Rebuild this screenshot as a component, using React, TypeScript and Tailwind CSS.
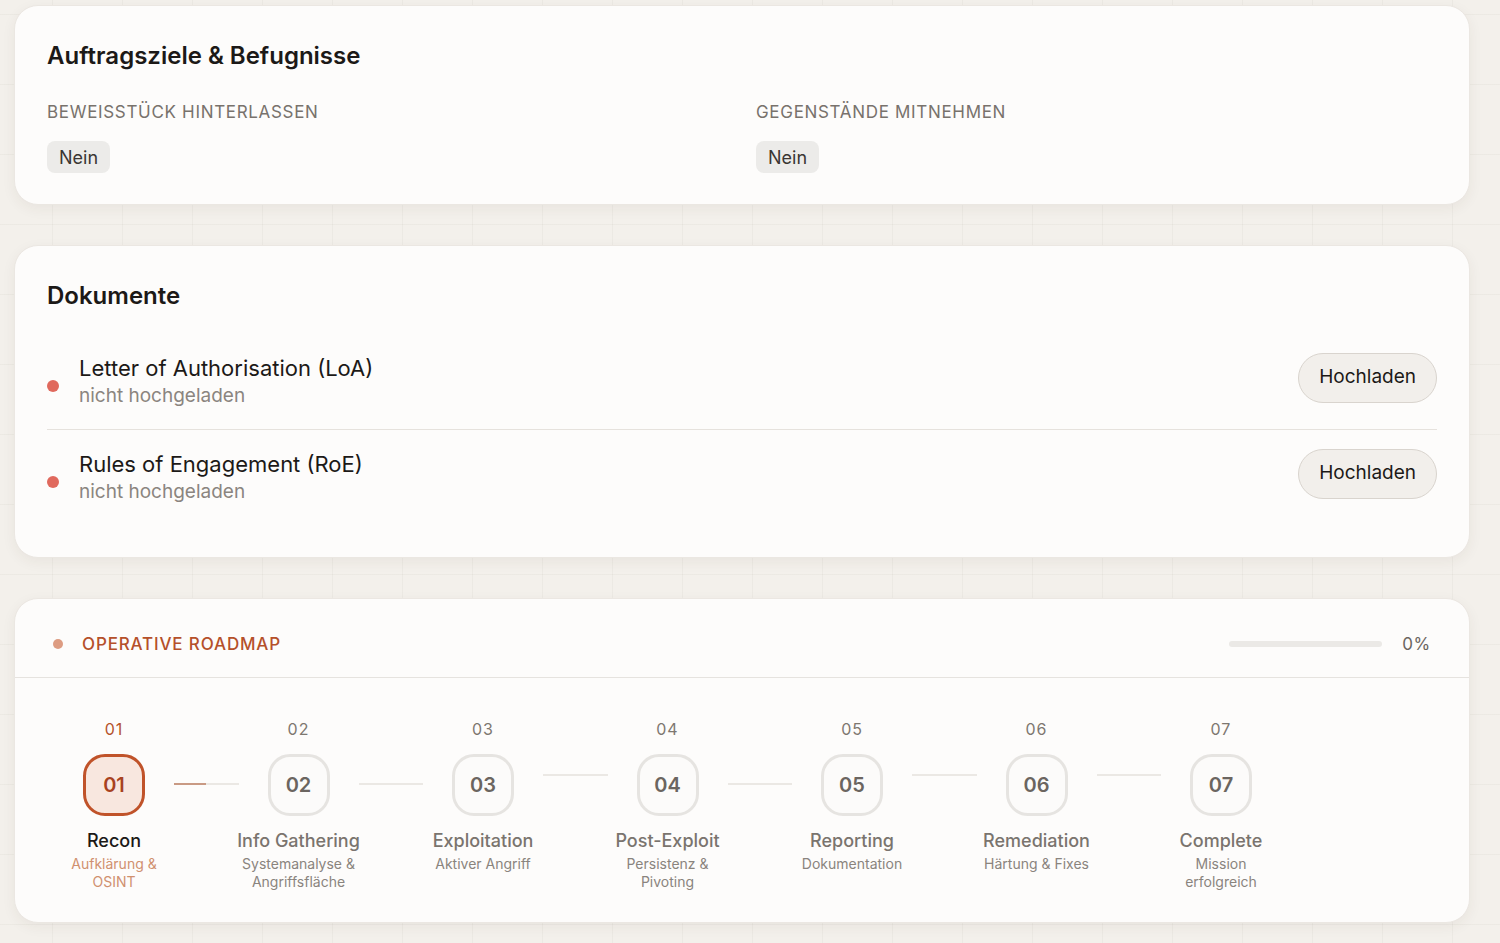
import React from "react";

type Step = { n: string; title: string; sub: string };

const steps: Step[] = [
  { n: "01", title: "Recon", sub: "Aufklärung & OSINT" },
  { n: "02", title: "Info Gathering", sub: "Systemanalyse & Angriffsfläche" },
  { n: "03", title: "Exploitation", sub: "Aktiver Angriff" },
  { n: "04", title: "Post-Exploit", sub: "Persistenz & Pivoting" },
  { n: "05", title: "Reporting", sub: "Dokumentation" },
  { n: "06", title: "Remediation", sub: "Härtung & Fixes" },
  { n: "07", title: "Complete", sub: "Mission erfolgreich" },
];

const documents = [
  { name: "Letter of Authorisation (LoA)", status: "nicht hochgeladen" },
  { name: "Rules of Engagement (RoE)", status: "nicht hochgeladen" },
];

const activeStep = 0;

function Card({ children, className = "" }: { children: React.ReactNode; className?: string }) {
  return (
    <section
      className={`rounded-[24px] border border-[#ebe7e2] bg-[#fdfcfb] shadow-[0_4px_14px_rgba(70,50,30,0.06)] ${className}`}
    >
      {children}
    </section>
  );
}

function Field({ label, value }: { label: string; value: string }) {
  return (
    <div>
      <div className="text-[17px] leading-[22px] tracking-[0.04em] uppercase text-[#78726c]">{label}</div>
      <span className="mt-[18px] inline-flex h-8 items-center rounded-lg bg-[#ecebe9] px-3 text-[18px] text-[#3a3633]">
        {value}
      </span>
    </div>
  );
}

function DocumentRow({ name, status, last }: { name: string; status: string; last: boolean }) {
  return (
    <div className={`flex items-center py-5 ${last ? "" : "border-b border-[#e6e2dd]"}`}>
      <span className="h-3 w-3 shrink-0 translate-y-1 rounded-full bg-[#e0695d]" />
      <div className="ml-5 flex-1">
        <div className="text-[22px] leading-7 text-[#1c1917]">{name}</div>
        <div className="mt-px text-[19px] leading-[26px] text-[#8b857f]">{status}</div>
      </div>
      <button className="h-[50px] -translate-y-1 rounded-full border border-[#d9d4ce] bg-[#f2efeb] px-5 text-[19px] text-[#1c1917]">
        Hochladen
      </button>
    </div>
  );
}

function StepItem({ step, active }: { step: Step; active: boolean }) {
  return (
    <div className="flex w-[120px] shrink-0 flex-col items-center text-center">
      <div
        className={`text-[16px] leading-5 tracking-[0.06em] ${active ? "text-[#b5532c]" : "text-[#7d7770]"}`}
      >
        {step.n}
      </div>
      <div
        className={`mt-[15px] flex h-[62px] w-[62px] items-center justify-center rounded-[22px] border-[3px] text-[20px] font-semibold ${
          active
            ? "border-[#c0532a] bg-[#f8e7df] text-[#a8421f]"
            : "border-[#e6e4e1] bg-[#fcfbfa] text-[#6b6560]"
        }`}
      >
        {step.n}
      </div>
      <div
        className={`mt-[13px] whitespace-nowrap text-[18px] leading-6 font-medium ${
          active ? "text-[#1c1917]" : "text-[#7a746e]"
        }`}
      >
        {step.title}
      </div>
      <div className={`mt-[2px] text-[14px] leading-[18px] ${active ? "text-[#d0906f]" : "text-[#8a847e]"}`}>
        {step.sub}
      </div>
    </div>
  );
}

function Connector({ fill }: { fill: number }) {
  return (
    <div className="mb-[42px] h-[2px] w-[64.5px] shrink-0 bg-[#ebe8e4]">
      <div className="h-full bg-[#c99a84]" style={{ width: `${fill * 100}%` }} />
    </div>
  );
}

export default function App() {
  return (
    <div
      className="min-h-screen bg-[#f3f0eb] bg-[linear-gradient(to_right,rgba(60,40,20,0.035)_1px,transparent_1px),linear-gradient(to_bottom,rgba(60,40,20,0.035)_1px,transparent_1px)] bg-[size:70px_70px] bg-[position:52px_14px] pl-[14px] pr-[30px] pt-[5px] pb-6"
      style={{ fontFamily: "Inter, 'Noto Sans', sans-serif" }}
    >
      <div className="flex flex-col gap-10">
        {/* Objectives */}
        <Card className="px-8 pt-8 pb-[31px]">
          <h2 className="text-[24px] leading-9 font-semibold text-[#1c1917]">Auftragsziele &amp; Befugnisse</h2>
          <div className="mt-[27px] grid grid-cols-2 gap-7">
            <Field label="Beweisstück hinterlassen" value="Nein" />
            <Field label="Gegenstände mitnehmen" value="Nein" />
          </div>
        </Card>

        {/* Documents */}
        <Card className="px-8 pt-8 pb-8">
          <h2 className="text-[24px] leading-9 font-semibold text-[#1c1917]">Dokumente</h2>
          <div className="mt-5">
            {documents.map((doc, i) => (
              <DocumentRow key={doc.name} name={doc.name} status={doc.status} last={i === documents.length - 1} />
            ))}
          </div>
        </Card>

        {/* Roadmap */}
        <Card className="overflow-hidden">
          <div className="flex items-center border-b border-[#e6e3df] px-[38px] pt-[34px] pb-[22px]">
            <span className="h-2.5 w-2.5 rounded-full bg-[#dd9c82]" />
            <span className="ml-[19px] text-[17px] leading-[22px] font-medium tracking-[0.05em] text-[#b5502a]">
              OPERATIVE ROADMAP
            </span>
            <div className="ml-auto h-1.5 w-[153px] rounded-full bg-[#ebe9e6]" />
            <span className="ml-5 text-[17px] leading-[22px] tracking-[0.04em] text-[#6b6560]">0%</span>
          </div>
          <div className="flex items-start px-[39px] pt-[41px] pb-[31px]">
            {steps.map((step, i) => (
              <div key={step.n} className="flex items-center">
                <StepItem step={step} active={i === activeStep} />
                {i < steps.length - 1 && <Connector fill={i === activeStep ? 0.5 : 0} />}
              </div>
            ))}
          </div>
        </Card>
      </div>
    </div>
  );
}
